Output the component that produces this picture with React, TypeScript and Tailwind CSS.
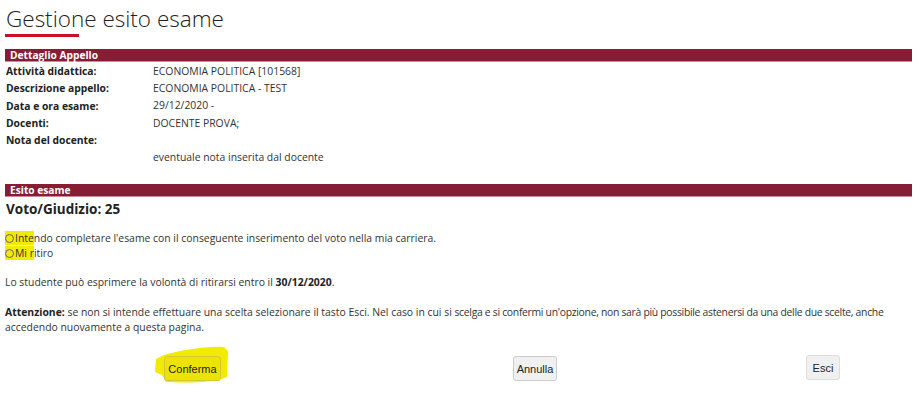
import React from "react";

const rows = [
  { label: "Attività didattica:", value: "ECONOMIA POLITICA [101568]" },
  { label: "Descrizione appello:", value: "ECONOMIA POLITICA - TEST" },
  { label: "Data e ora esame:", value: "29/12/2020 -" },
  { label: "Docenti:", value: "DOCENTE PROVA;" },
  { label: "Nota del docente:", value: "" },
];

function SectionBar({ title }: { title: string }) {
  return (
    <div className="h-[13px] bg-[#861d35] border-b border-[#c98a99] pl-[5px] text-[10.2px] leading-[12px] font-bold text-white">
      {title}
    </div>
  );
}

function Radio() {
  return <span className="inline-block w-[9px] h-[9px] rounded-full border border-[#666] mr-[1px] align-[-1px]" />;
}

export default function App() {
  return (
    <div className="w-[921px] h-[420px] bg-white text-[#333] font-['Open_Sans',sans-serif] pl-[5px] pr-[9px] overflow-hidden">
      {/* Titolo */}
      <div className="pt-[4px]">
        <h1 className="text-[22.5px] leading-[30px] font-light text-[#222] pl-[1px]">Gestione esito esame</h1>
        <div className="w-[74px] h-[3px] bg-[#c8102e]" />
      </div>

      {/* Dettaglio appello */}
      <div className="mt-[12px]">
        <SectionBar title="Dettaglio Appello" />
        <div className="pt-[1px] text-[10.4px]">
          {rows.map((r) => (
            <div key={r.label} className="flex h-[17.3px] items-center">
              <div className="w-[148px] pl-[1px] font-bold text-[#222] text-[10.3px]">{r.label}</div>
              <div>{r.value}</div>
            </div>
          ))}
          <div className="flex h-[17.3px] items-center">
            <div className="w-[148px]" />
            <div>eventuale nota inserita dal docente</div>
          </div>
        </div>
      </div>

      {/* Esito */}
      <div className="mt-[17px]">
        <SectionBar title="Esito esame" />
        <div className="pl-[1px] pt-[2px] text-[13.5px] leading-[20px] font-bold text-[#222]">Voto/Giudizio: 25</div>

        <div className="mt-[12.5px] text-[10.4px] leading-[15px]">
          <div>
            <span className="bg-[#f2ea00]">
              <Radio />
              Inte
            </span>
            ndo completare l'esame con il conseguente inserimento del voto nella mia carriera.
          </div>
          <div>
            <span className="bg-[#f2ea00]">
              <Radio />
              Mi r
            </span>
            itiro
          </div>
        </div>

        <div className="mt-[14px] text-[10.4px] leading-[15px]">
          Lo studente può esprimere la volontà di ritirarsi entro il <b className="text-[#222]">30/12/2020</b>.
        </div>

        <div className="mt-[15px] text-[10.4px] leading-[14.5px]">
          <div className="whitespace-nowrap">
            <b className="text-[#222]">Attenzione:</b> se non si intende effettuare una scelta selezionare il tasto Esci. Nel caso in cui si{" "}
            <span className="tracking-[-0.3px]">
              scelga e si confermi un'opzione, non sarà più possibile astenersi da una delle due scelte, anche
            </span>
          </div>
          <div>accedendo nuovamente a questa pagina.</div>
        </div>

        {/* Pulsanti */}
        <div className="mt-[22px] flex items-start font-['Liberation_Sans',sans-serif] text-[11px] text-[#222]">
          <div className="ml-[159px] relative">
            <svg className="absolute -left-[10px] -top-[10px]" width="76" height="38" viewBox="0 0 76 38">
              <path
                d="M10 9 C28 4 52 0 70 1 L74 5 L73 31 C60 37 32 37 12 36 L8 29 L1 26 L2 13 Z"
                fill="#f2ea00"
              />
            </svg>
            <button className="relative w-[57px] h-[25px] rounded-[3px] border border-[#d2cb2e] bg-[#ece400]">Conferma</button>
          </div>
          <button className="ml-[292px] w-[44px] h-[25px] rounded-[3px] border border-[#ccc] bg-[#f0f0f0]">Annulla</button>
          <button className="ml-[249px] -mt-[1px] w-[34px] h-[25px] rounded-[3px] border border-[#ddd] bg-[#f0f0f0]">Esci</button>
        </div>
      </div>
    </div>
  );
}
